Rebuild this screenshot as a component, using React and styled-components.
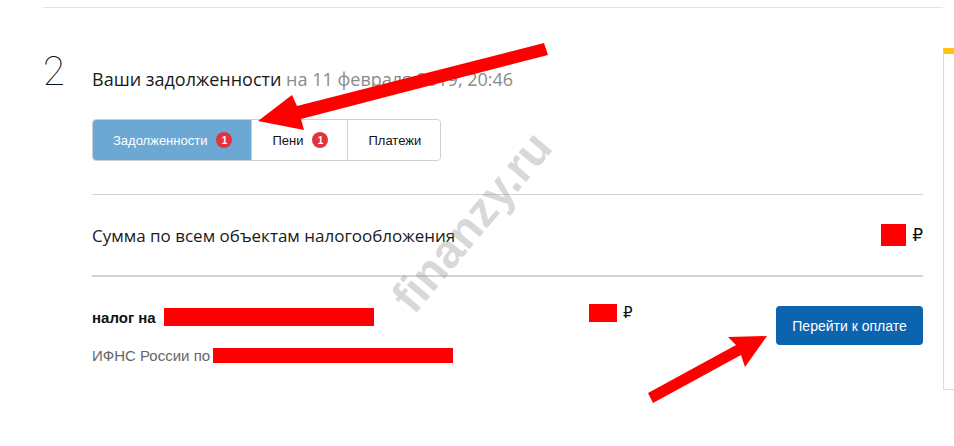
import React from 'react'
import styled, { createGlobalStyle } from 'styled-components'

const GlobalStyle = createGlobalStyle`
  html, body {
    margin: 0;
    padding: 0;
    background: #fff;
  }
  body {
    font-family: "Liberation Sans", Arial, sans-serif;
    color: #222;
    overflow: hidden;
  }
`

const Page = styled.div`
  position: relative;
  display: flex;
  width: 954px;
  height: 446px;
  padding-left: 43px;
  box-sizing: border-box;
  overflow: hidden;
`

const Main = styled.div`
  width: 900px;
  flex-shrink: 0;
  padding-top: 7px;
`

const Section = styled.section`
  display: grid;
  grid-template-columns: 49px 831px;
  border-top: 1px solid #e3e3e3;
  padding-top: 44px;
`

const StepNumber = styled.div`
  font-family: Roboto, "Liberation Sans", sans-serif;
  font-weight: 100;
  font-size: 40px;
  line-height: 40px;
  color: #111;
`

const Content = styled.div`
  display: flex;
  flex-direction: column;
`

const Title = styled.h2`
  margin: 16px 0 0;
  font-family: "Open Sans", sans-serif;
  font-weight: 400;
  font-size: 18px;
  line-height: 22px;
  color: #1a1a1a;

  span {
    color: #8a8a8a;
  }
`

const Tabs = styled.div`
  display: flex;
  align-self: flex-start;
  margin-top: 29px;
  border: 1px solid #cfcfcf;
  border-radius: 4px;
  overflow: hidden;
`

const Tab = styled.button`
  display: flex;
  align-items: center;
  gap: 9px;
  height: 40px;
  padding: 0 19px 0 20px;
  border: none;
  border-left: ${p => (p.$first ? 'none' : '1px solid #cfcfcf')};
  background: ${p => (p.$active ? '#6ba8d4' : '#fff')};
  color: ${p => (p.$active ? '#fff' : '#111')};
  font-family: "Liberation Sans", Arial, sans-serif;
  font-size: 13px;
  cursor: pointer;
`

const Badge = styled.span`
  display: inline-flex;
  align-items: center;
  justify-content: center;
  width: 16px;
  height: 16px;
  border-radius: 50%;
  background: #e2343c;
  color: #fff;
  font-size: 10px;
  font-weight: 700;
`

const Rule = styled.hr`
  margin: ${p => p.$top || 0}px 0 0;
  border: none;
  border-top: ${p => (p.$thick ? 2 : 1)}px solid #d2d2d2;
  height: 0;
`

const SumRow = styled.div`
  display: flex;
  align-items: center;
  justify-content: space-between;
  height: 80px;
  font-family: "Open Sans", sans-serif;
  font-size: 17px;
  color: #1a1a1a;
`

const Amount = styled.div`
  display: flex;
  align-items: center;
  gap: 6px;
  font-family: "DejaVu Sans", sans-serif;
  font-size: ${p => p.$size || 15}px;
  color: #111;
`

const Redacted = styled.span`
  display: inline-block;
  width: ${p => p.$w}px;
  height: ${p => p.$h}px;
  background: #ff0000;
  vertical-align: middle;
`

const DebtRow = styled.div`
  display: grid;
  grid-template-columns: 497px 1fr auto;
  align-items: start;
  padding-top: 27px;
`

const DebtInfo = styled.div`
  display: flex;
  flex-direction: column;
  gap: 21px;
  padding-top: 4px;
`

const DebtName = styled.div`
  display: flex;
  align-items: center;
  gap: 8px;
  font-size: 15px;
  font-weight: 700;
  color: #111;
`

const Inspection = styled.div`
  display: flex;
  align-items: center;
  gap: 3px;
  font-size: 15px;
  color: #666;
`

const PayButton = styled.button`
  margin-top: 2px;
  width: 147px;
  height: 39px;
  border: none;
  border-radius: 4px;
  background: #0c63ae;
  color: #fff;
  font-family: "Liberation Sans", Arial, sans-serif;
  font-size: 14px;
  cursor: pointer;
`

const SidePanel = styled.aside`
  margin-top: 48px;
  width: 20px;
  height: 342px;
  flex-shrink: 0;
  border-left: 1px solid #d9dde1;
  border-bottom: 1px solid #d9dde1;
  border-top: 6px solid #ffc20e;
  box-sizing: border-box;
`

const Watermark = styled.div`
  position: absolute;
  left: 362px;
  top: 194px;
  font-family: "Liberation Sans", Arial, sans-serif;
  font-weight: 700;
  font-size: 47px;
  color: rgba(160, 160, 160, 0.42);
  transform: rotate(-50deg);
  transform-origin: center;
  pointer-events: none;
`

const Overlay = styled.svg`
  position: absolute;
  left: 0;
  top: 0;
  pointer-events: none;
`

export default function App() {
  return (
    <>
      <GlobalStyle />
      <Page>
        <Main>
          <Section>
            <StepNumber>2</StepNumber>
            <Content>
              <Title>
                Ваши задолженности <span>на 11 февраля 2019, 20:46</span>
              </Title>
              <Tabs>
                <Tab $first $active>Задолженности <Badge>1</Badge></Tab>
                <Tab>Пени <Badge>1</Badge></Tab>
                <Tab>Платежи</Tab>
              </Tabs>
              <Rule $top={33} />
              <SumRow>
                <span>Сумма по всем объектам налогообложения</span>
                <Amount $size={17}>
                  <Redacted $w={25} $h={22} />₽
                </Amount>
              </SumRow>
              <Rule $thick />
              <DebtRow>
                <DebtInfo>
                  <DebtName>
                    налог на <Redacted $w={210} $h={18} />
                  </DebtName>
                  <Inspection>
                    ИФНС России по <Redacted $w={240} $h={15} />
                  </Inspection>
                </DebtInfo>
                <Amount>
                  <Redacted $w={28} $h={18} />₽
                </Amount>
                <PayButton>Перейти к оплате</PayButton>
              </DebtRow>
            </Content>
          </Section>
        </Main>
        <SidePanel />
        <Watermark>finanzy.ru</Watermark>
        <Overlay width="954" height="446" viewBox="0 0 954 446">
          <polygon
            fill="#ff0000"
            points="258,121 292,95 297,106 544,43 548,55 301,119 304,130"
          />
          <polygon
            fill="#ff0000"
            points="767,336 745,367 741,355 653,403 648,393 736,345 728,337"
          />
        </Overlay>
      </Page>
    </>
  )
}
